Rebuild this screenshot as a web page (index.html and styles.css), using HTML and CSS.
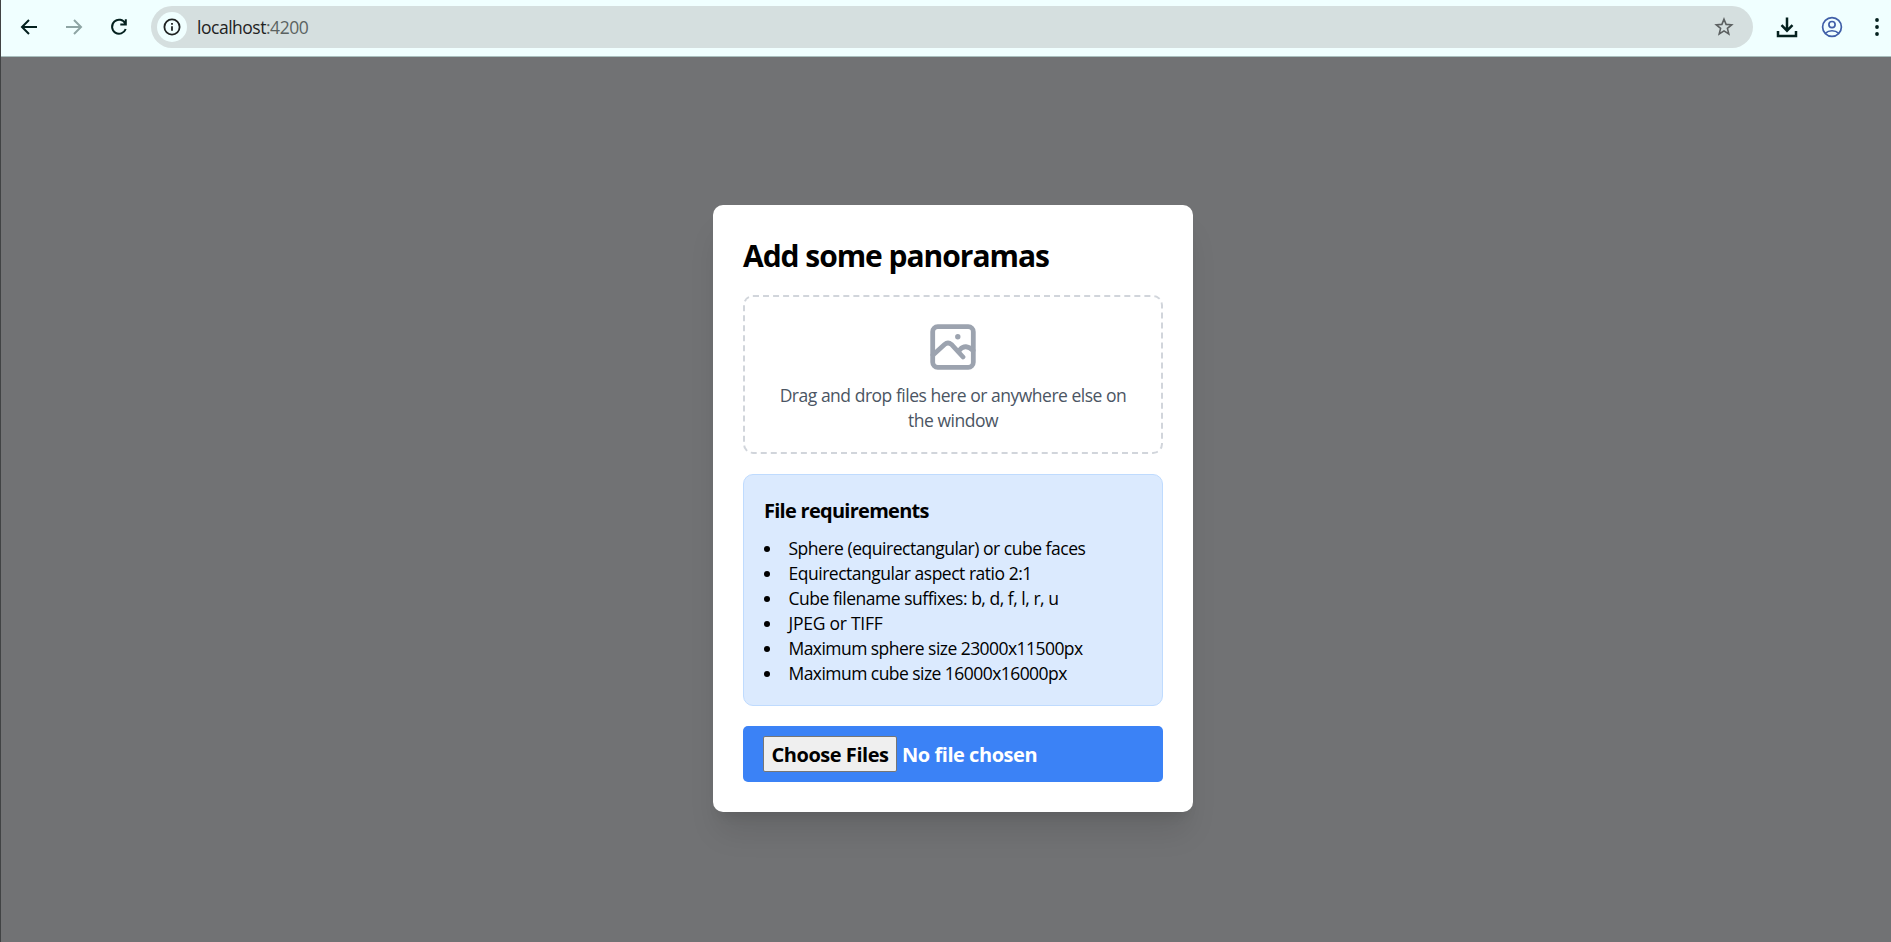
FILE: index.html
```html
<!DOCTYPE html>
<html lang="en">
<head>
<meta charset="utf-8">
<title>Add some panoramas</title>
<link rel="stylesheet" href="styles.css">
</head>
<body>
<header class="toolbar">
  <svg class="icon back" width="24" height="24" viewBox="0 0 24 24"><path d="M20 12H5.500M12 5l-7 7 7 7"/></svg>
  <svg class="icon forward" width="24" height="24" viewBox="0 0 24 24"><path d="M5 12h14.500M13 5l7 7-7 7"/></svg>
  <svg class="icon reload" width="24" height="24" viewBox="0 0 24 24"><path d="M18.3 8.5A7 7 0 1 0 18.700 14M18.800 4.200v5.300h-5.500"/></svg>
  <div class="address">
    <span class="site-info"><svg width="18" height="18" viewBox="0 0 18 18"><circle cx="9" cy="9" r="7.6"/><path d="M9 8.200v4.600M9 5v1.800"/></svg></span>
    <span class="url">localhost<span class="port">:4200</span></span>
    <svg class="star" width="20" height="20" viewBox="0 0 20 20"><path d="M10 2.200l2.100 5.200 5.600.4-4.300 3.600 1.400 5.500-4.800-3-4.800 3 1.400-5.500-4.300-3.600 5.600-.4z"/></svg>
  </div>
  <svg class="icon download" width="24" height="24" viewBox="0 0 24 24"><path d="M12 2.500v13M6.500 10.200l5.500 5.500 5.500-5.500M3 16v5h18v-5"/></svg>
  <svg class="icon profile" width="24" height="24" viewBox="0 0 24 24"><circle cx="12" cy="12" r="9.400"/><circle cx="12" cy="9.600" r="3.100"/><path d="M5.200 18.300c3.800-3.400 9.800-3.400 13.600 0"/></svg>
  <svg class="icon menu" width="24" height="24" viewBox="0 0 24 24"><circle cx="12" cy="5" r="1.900"/><circle cx="12" cy="12" r="1.900"/><circle cx="12" cy="19" r="1.900"/></svg>
</header>
<main class="page">
  <section class="card">
    <h1 class="title">Add some panoramas</h1>
    <div class="dropzone">
      <svg class="picture" width="46" height="46" viewBox="0 0 46 46"><rect x="2.700" y="2.700" width="40.600" height="40.600" rx="5"/><path d="M3 31L14.500 20.500q3.500-3 7 0L33 33M28.500 28l1.500-2.500q5.500-6 13 1"/><circle cx="27.800" cy="12.700" r="2.700"/></svg>
      <p class="hint">Drag and drop files here or anywhere else on<br>the window</p>
    </div>
    <div class="requirements">
      <h2 class="subtitle">File requirements</h2>
      <ul class="rules">
        <li>Sphere (equirectangular) or cube faces</li>
        <li>Equirectangular aspect ratio 2:1</li>
        <li>Cube filename suffixes: b, d, f, l, r, u</li>
        <li class="formats">JPEG or TIFF</li>
        <li class="limit">Maximum sphere size 23000x11500px</li>
        <li class="limit">Maximum cube size 16000x16000px</li>
      </ul>
    </div>
    <div class="picker"><button class="choose">Choose Files</button><span>No file chosen</span></div>
  </section>
</main>
</body>
</html>
```
FILE: styles.css
```css
* { box-sizing: border-box; }
body {
  margin: 0;
  height: 942px;
  display: flex;
  flex-direction: column;
  overflow: hidden;
  background: #717274;
  border-left: 1px solid #414344;
  font-family: "Segoe UI", "Open Sans", "Noto Sans", sans-serif;
  font-size: 17.5px;
  line-height: 25px;
  letter-spacing: -0.48px;
  color: #000;
}
.toolbar {
  height: 57px;
  flex: none;
  display: flex;
  align-items: center;
  padding: 0 0 2px 15px;
  background: #f0ffff;
  border-bottom: 1px solid #a9bfbe;
}
.icon { flex: none; fill: none; stroke: #04211f; stroke-width: 2; }
.back { margin-left: 1px; }
.forward { margin-left: 20px; stroke: #8ea5a4; }
.reload { margin-left: 22px; }
.address {
  width: 1602px;
  height: 42px;
  margin: -1px 0 0 20px;
  padding: 0 19px 0 6px;
  display: flex;
  align-items: center;
  border-radius: 21px;
  background: #d5dfdf;
}
.site-info {
  width: 30px;
  height: 30px;
  display: grid;
  place-items: center;
  border-radius: 50%;
  background: #f0ffff;
}
.site-info svg { fill: none; stroke: #1f2322; stroke-width: 1.8; }
.url { margin-left: 10px; padding-top: 2px; color: #1f2322; }
.port { color: #5b6362; }
.star { margin-left: auto; fill: none; stroke: #5c6061; stroke-width: 1.6; }
.download { margin-left: 22px; stroke-width: 2.5; }
.profile { margin-left: 21px; stroke: #3f5fa8; stroke-width: 1.7; }
.menu { margin-left: 21px; fill: #04211f; stroke: none; }
.page { flex: 1; display: flex; justify-content: center; align-items: flex-start; padding: 148px 0 0 14px; }
.card {
  width: 480px;
  height: 607px;
  padding: 30px;
  display: flex;
  flex-direction: column;
  gap: 20px;
  border-radius: 10px;
  background: #fff;
  box-shadow: 0 25px 31px -6px rgba(0, 0, 0, .1), 0 10px 12px -7px rgba(0, 0, 0, .1);
}
.title {
  height: 40px;
  margin: 0;
  padding-top: 1px;
  font-size: 30px;
  line-height: 40px;
  font-weight: 700;
  letter-spacing: -1.04px;
}
.dropzone {
  height: 159px;
  display: flex;
  flex-direction: column;
  align-items: center;
  padding-top: 27px;
  border: 2px dashed #d1d5db;
  border-radius: 10px;
}
.picture { fill: none; stroke: #9ca3af; stroke-width: 4.8; stroke-linecap: round; }
.picture circle { fill: #9ca3af; stroke: none; }
.hint { margin: 13px 0 0; text-align: center; color: #4b5563; white-space: nowrap; }
.requirements {
  height: 232px;
  padding: 20px;
  border: 1px solid #bfdbfe;
  border-radius: 10px;
  background: #dbeafe;
}
.subtitle {
  margin: 0 0 9px;
  font-size: 20px;
  line-height: 32px;
  font-weight: 700;
  letter-spacing: -0.73px;
}
.rules { margin: 0; padding: 0; list-style: inside disc; white-space: nowrap; }
.formats { letter-spacing: -0.25px; }
.limit { letter-spacing: -0.55px; }
.picker {
  height: 56px;
  display: flex;
  align-items: center;
  gap: 5px;
  padding: 0 20px;
  border-radius: 5px;
  background: #3b82f6;
  color: #fff;
  font-size: 20px;
  font-weight: 700;
  letter-spacing: -0.46px;
}
.choose {
  width: 134px;
  height: 36px;
  padding: 0;
  border: 1px solid #767676;
  border-radius: 2px;
  background: #efefef;
  font: inherit;
  letter-spacing: inherit;
  color: #000;
}
```
